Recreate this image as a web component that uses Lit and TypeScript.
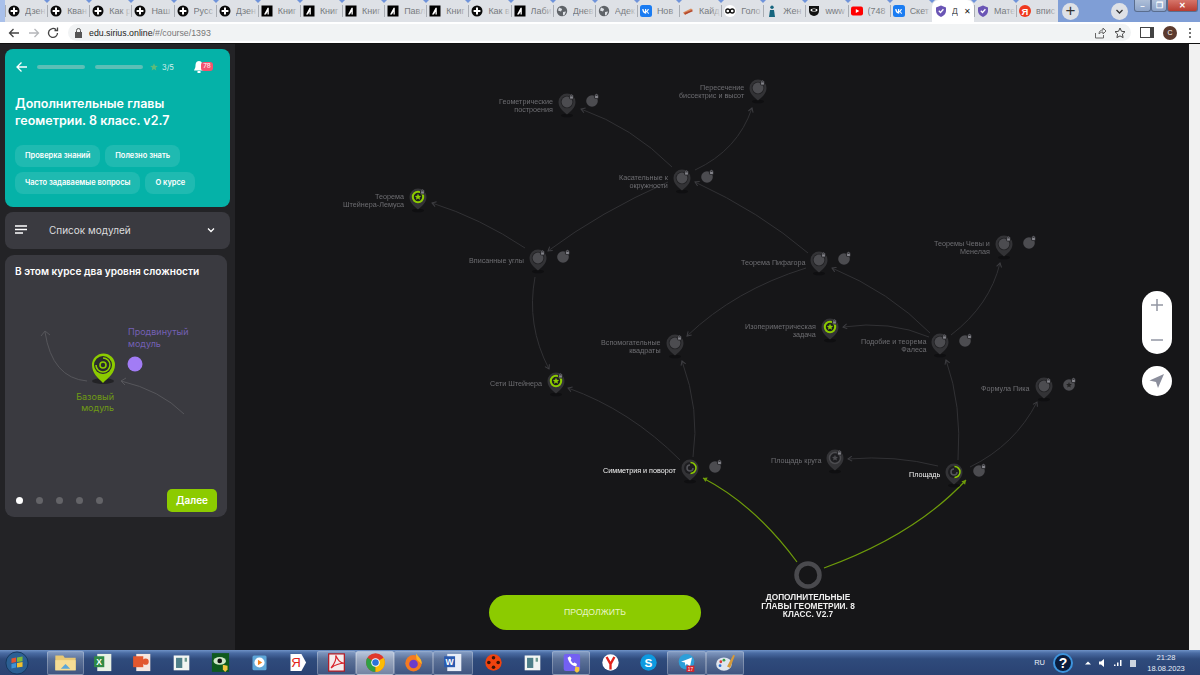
import { LitElement, html, css, svg } from "lit";
import { customElement } from "lit/decorators.js";

type Tab = { icon: string; title: string; active?: boolean };
const tabs: Tab[] = [
  ["plus", "Дзен"], ["plus", "Кван"], ["plus", "Как р"], ["plus", "Наш"], ["plus", "Русс"], ["plus", "Дзен"],
  ["lit", "Книг"], ["lit", "Книг"], ["lit", "Книг"], ["lit", "Павл"], ["lit", "Книг"], ["plus", "Как в"],
  ["lit", "Лаби"], ["globe", "Днев"], ["globe", "Адек"], ["vk", "Нов"], ["cake", "Кайд"], ["inf", "Голо"],
  ["person", "Жен"], ["mask", "www"], ["yt", "(748"], ["vk", "Скет"], ["shield", "Д"], ["shield", "Мате"], ["ya", "впис"],
].map(([icon, title]) => ({ icon, title, active: false }));
tabs[22].active = true;

function tabIcon(k: string) {
  switch (k) {
    case "plus":
      return svg`<circle cx="6" cy="6" r="5.5" fill="#0a0a0a"/><path d="M6 2.6v6.8M2.6 6h6.8" stroke="#fff" stroke-width="2"/>`;
    case "lit":
      return svg`<rect x=".5" y=".5" width="11" height="11" fill="#000"/><path d="M3 9.500 6.600 2.800h1.200v6.700H6.500V6.800L5 9.500z" fill="#fff"/>`;
    case "globe":
      return svg`<circle cx="6" cy="6" r="5.200" fill="#5f6368"/><path d="M3 2.500 6.200 4 5 6.500 2 5.500zM7 7l3-.5-1.500 3.500-1.500.5z" fill="#dee1e6"/>`;
    case "vk":
      return svg`<rect width="12" height="12" rx="2.500" fill="#1a7cf2"/><path d="M2.200 4h1.300c.2 1.600.9 2.500 1.500 2.700V4h1.200v1.900c.6-.1 1.300-.9 1.500-1.900h1.200c-.2 1.200-1 2-1.600 2.400.6.3 1.400 1 1.800 2.300H8c-.3-.9-1-1.500-1.800-1.600v1.600H6C3.800 8.700 2.400 6.900 2.200 4z" fill="#fff"/>`;
    case "cake":
      return svg`<path d="M1 7.500 9 3.500l2 1.500-8 5z" fill="#d98a5c"/><path d="M2 8 10 5l.8 1.200-7.500 3.300z" fill="#b3492e"/>`;
    case "inf":
      return svg`<circle cx="6" cy="6" r="6" fill="#fff"/><circle cx="3.800" cy="6" r="2" fill="none" stroke="#111" stroke-width="1.300"/><circle cx="8.200" cy="6" r="2" fill="none" stroke="#111" stroke-width="1.300"/>`;
    case "person":
      return svg`<circle cx="6" cy="2.200" r="1.700" fill="#17657e"/><path d="M4 5h4l1 7H3z" fill="#17657e"/>`;
    case "mask":
      return svg`<path d="M1 1h10v5a5 5 0 0 1-10 0z" fill="#111"/><ellipse cx="6" cy="5" rx="3.500" ry="1.600" fill="#fff"/><ellipse cx="6" cy="5" rx="2" ry="1" fill="#111"/>`;
    case "yt":
      return svg`<rect y="1.500" width="12" height="9" rx="2" fill="#f00"/><path d="M4.800 4v4L8.300 6z" fill="#fff"/>`;
    case "shield":
      return svg`<path d="M6 .5 11 2.500v3.500C11 9 8.500 10.800 6 12 3.500 10.800 1 9 1 6V2.500z" fill="#6a55b5"/><path d="M3.800 5.800 5.500 7.500 8.400 4.300" fill="none" stroke="#fff" stroke-width="1.300"/>`;
    default:
      return svg`<circle cx="6" cy="6" r="6" fill="#f0391e"/><text x="6" y="9.500" text-anchor="middle" font-size="9.500" font-weight="700" font-family="Liberation Sans" fill="#fff">Я</text>`;
  }
}

type Node = { x: number; y: number; l: string[]; k: string; dot?: string; white?: boolean };
const nodes: Node[] = [
  { x: 567, y: 102, l: ["Геометрические", "построения"], k: "lock", dot: "lock" },
  { x: 758, y: 88, l: ["Пересечение", "биссектрис и высот"], k: "lock" },
  { x: 682, y: 178, l: ["Касательные к", "окружности"], k: "lock", dot: "lock" },
  { x: 418, y: 197, l: ["Теорема", "Штейнера-Лемуса"], k: "done" },
  { x: 538, y: 258, l: ["Вписанные углы"], k: "lock", dot: "lock" },
  { x: 819, y: 260, l: ["Теорема Пифагора"], k: "lock", dot: "lock" },
  { x: 1004, y: 244, l: ["Теоремы Чевы и", "Менелая"], k: "lock", dot: "lock" },
  { x: 675, y: 343, l: ["Вспомогательные", "квадраты"], k: "lock" },
  { x: 830, y: 327, l: ["Изопериметрическая", "задача"], k: "done" },
  { x: 940, y: 342, l: ["Подобие и теорема", "Фалеса"], k: "lock", dot: "lock" },
  { x: 1044, y: 386, l: ["Формула Пика"], k: "lock", dot: "star" },
  { x: 556, y: 381, l: ["Сети Штейнера"], k: "done" },
  { x: 835, y: 458, l: ["Площадь круга"], k: "star" },
  { x: 690, y: 468, l: ["Симметрия и поворот"], k: "prog", dot: "lock", white: true },
  { x: 954, y: 472, l: ["Площадь"], k: "prog", dot: "lock", white: true },
];

const edges = [
  "M672 167Q632 127 581 109", "M695 170Q738 150 752 108", "M668 182Q600 212 548 251",
  "M525 248Q480 218 432 203", "M535 277Q526 325 549 369", "M808 253Q760 212 695 182",
  "M806 268Q735 290 687 336", "M930 333Q890 292 832 268", "M951 335Q990 305 1000 263",
  "M929 337Q890 320 843 327", "M958 460Q962 405 946 360", "M970 467Q1015 445 1037 402",
  "M938 466Q895 455 848 459", "M680 460Q630 410 568 388", "M693 457Q700 410 682 361",
];
const greenEdges = ["M797 562Q755 505 703 478", "M824 568Q915 535 966 480"];

const star = (x: number, y: number, r: number, fill: string) => {
  const pts: string[] = [];
  for (let i = 0; i < 10; i++) {
    const a = -Math.PI / 2 + (i * Math.PI) / 5;
    const rr = i % 2 ? r * 0.45 : r;
    pts.push(`${(x + rr * Math.cos(a)).toFixed(1)},${(y + rr * Math.sin(a)).toFixed(1)}`);
  }
  return svg`<polygon points=${pts.join(" ")} fill=${fill}/>`;
};
const lock = (x: number, y: number) => svg`
  <circle cx=${x} cy=${y} r="2.600" fill="#2a2a2d"/>
  <rect x=${x - 1.4} y=${y - 0.6} width="2.800" height="2.200" fill="#85858c"/>
  <path d="M${x - 0.9} ${y - 0.6}v-.7a.9 .9 0 0 1 1.800 0v.7" fill="none" stroke="#85858c" stroke-width=".6"/>`;

function pin({ x, y, k }: Node) {
  return svg`
    <ellipse cx=${x} cy=${y + 13.5} rx="6" ry="1.800" fill="#0f0f11"/>
    <path d="M${x} ${y + 12.5}C${x - 3} ${y + 10} ${x - 8.5} ${y + 6} ${x - 8.5} ${y}a8.500 8.500 0 0 1 17 0C${x + 8.5} ${y + 6} ${x + 3} ${y + 10} ${x} ${y + 12.5}z" fill="#333336"/>
    ${k === "lock" ? svg`<circle cx=${x} cy=${y} r="6.300" fill="#232326"/><circle cx=${x} cy=${y} r="5.400" fill="#4c4c50"/>${lock(x + 4.5, y - 5)}` : ""}
    ${k === "done" ? svg`<circle cx=${x} cy=${y} r="5.200" fill="#1d1d20" stroke="#8ccb00" stroke-width="2"/>${star(x, y, 3.4, "#8ccb00")}${lock(x + 4.5, y - 5)}` : ""}
    ${k === "star" ? svg`<circle cx=${x} cy=${y} r="5.500" fill="#1d1d20" stroke="#4c4c50" stroke-width="1.500"/>${star(x, y, 3.2, "#4c4c50")}${lock(x + 4.5, y - 5)}` : ""}
    ${k === "prog" ? svg`<circle cx=${x} cy=${y} r="6" fill="#1d1d20"/><path d="M${x + 0.5} ${y - 5.5}A5.500 5.500 0 0 1 ${x + 0.5} ${y + 5.5}" fill="none" stroke="#8ccb00" stroke-width="1.500"/><path d="M${x} ${y - 3}A3 3 0 1 0 ${x + 3} ${y}" fill="none" stroke="#55555a" stroke-width="1.500"/>` : ""}`;
}
function dot({ x, y, dot: d }: Node) {
  if (!d) return "";
  const cx = x + 25, cy = y - 1;
  return svg`<circle cx=${cx} cy=${cy} r="5.800" fill="#4c4c50"/>${d === "star" ? star(cx, cy, 3, "#222") : ""}${lock(cx + 4.5, cy - 4.5)}`;
}

function taskIcon(k: string) {
  switch (k) {
    case "explorer":
      return svg`<path d="M3 7h10l2 3h14v16H3z" fill="#e8c874"/><path d="M3 13h26v13H3z" fill="#f6dd95"/><path d="M10 24l6-6 6 6z" fill="#5ba6d8"/>`;
    case "excel":
      return svg`<rect x="8" y="5" width="18" height="22" fill="#e8f0e4"/><rect x="4" y="8" width="13" height="14" fill="#2f8a46"/><text x="10.500" y="19" text-anchor="middle" font-size="11" font-weight="700" font-family="Liberation Sans" fill="#fff">X</text>`;
    case "ppt":
      return svg`<rect x="8" y="5" width="18" height="22" fill="#f5e6df"/><rect x="4" y="8" width="13" height="14" fill="#e2572e"/><circle cx="20" cy="15" r="4" fill="#e2572e"/>`;
    case "note":
      return svg`<rect x="6" y="7" width="20" height="19" fill="#f2f5f2"/><rect x="9" y="10" width="8" height="13" fill="#4e7f88"/><path d="M20 10h3v5h-3z" fill="#6d9a8e"/>`;
    case "eye":
      return svg`<rect x="5" y="4" width="22" height="24" fill="#0f5a1e"/><ellipse cx="15" cy="14" rx="8" ry="5" fill="#cfe8c8"/><circle cx="15" cy="14" r="3" fill="#111"/><path d="M19 19l6 1v5l-3 3-3-3z" fill="#f3c63d"/>`;
    case "media":
      return svg`<rect x="7" y="7" width="18" height="19" rx="2" fill="#5fa7d8"/><circle cx="16" cy="16" r="6.500" fill="#fff"/><path d="M14 12.500v7l5.500-3.500z" fill="#f0831e"/>`;
    case "yabr":
      return svg`<path d="M7 5h14l6 11-6 11H7z" fill="#fff"/><text x="14" y="22" text-anchor="middle" font-size="17" font-family="Liberation Sans" fill="#e2231a">Я</text>`;
    case "pdf":
      return svg`<rect x="6" y="5" width="20" height="22" fill="#f4ecec" stroke="#b5121b" stroke-width="1.500"/><path d="M9 23C14 17 16 11 15 7c3 6 5 9 11 10-6 0-12 2-17 6z" fill="none" stroke="#d8232a" stroke-width="1.500"/>`;
    case "chrome":
      return svg`<circle cx="16" cy="16" r="12" fill="#e0372c"/><path d="M16 16 5.600 10A12 12 0 0 0 16 28z" fill="#2ea043"/><path d="M16 16v12A12 12 0 0 0 26.400 10z" fill="#fbbc05"/><circle cx="16" cy="16" r="5.500" fill="#fff"/><circle cx="16" cy="16" r="4.200" fill="#2a73d9"/>`;
    case "firefox":
      return svg`<circle cx="16" cy="17" r="10.500" fill="#f47a20"/><path d="M19 4c3 5 8 7 7.500 14L20 12z" fill="#fcb424"/><circle cx="16" cy="18" r="5.500" fill="#6d3bc9"/>`;
    case "word":
      return svg`<rect x="8" y="5" width="18" height="22" fill="#e9eef8"/><rect x="4" y="8" width="14" height="14" fill="#2a5bb0"/><text x="11" y="19" text-anchor="middle" font-size="11" font-weight="700" font-family="Liberation Sans" fill="#fff">W</text>`;
    case "film":
      return svg`<circle cx="16" cy="16" r="10.500" fill="#f0430f"/>${[[16, 10], [16, 22], [10, 16], [22, 16]].map(([a, b]) => svg`<circle cx=${a} cy=${b} r="2.300" fill="#3a1408"/>`)}`;
    case "viber":
      return svg`<rect x="6" y="5" width="21" height="22" rx="3" fill="#7360f2"/><path d="M11 10c2 7 5 10 11 11l1-3-3-2-2 1c-1-1-2-2-3-4l1-2-2-3z" fill="#fff"/><path d="M21 21l5 1v5l-3 2-3-2z" fill="#f3c63d"/>`;
    case "yandex":
      return svg`<circle cx="16" cy="16" r="10.500" fill="#fff"/><path d="M11 9l5 9 5-9M16 18v7" fill="none" stroke="#e2231a" stroke-width="3"/>`;
    case "skype":
      return svg`<circle cx="16" cy="16" r="10.500" fill="#0e9ae0"/><text x="16" y="21.500" text-anchor="middle" font-size="15" font-weight="700" font-family="Liberation Sans" fill="#fff">S</text>`;
    case "tg":
      return svg`<circle cx="16" cy="15" r="10" fill="#2c9fd9"/><path d="M9 15 23 9.500 20.500 21l-4-3-2 2-.5-4z" fill="#fff"/><rect x="16" y="20" width="10" height="8" fill="#d8232a"/><text x="21" y="26.500" text-anchor="middle" font-size="6" font-family="Liberation Sans" fill="#fff">17</text>`;
    case "paint":
      return svg`<ellipse cx="14" cy="18" rx="10" ry="8.500" fill="#dfe6ee"/><circle cx="10" cy="15" r="1.800" fill="#d83c3c"/><circle cx="14" cy="13" r="1.800" fill="#3c9e4a"/><circle cx="9" cy="20" r="1.800" fill="#2f6fd0"/><path d="M18 21 26 6l2 1-6 16z" fill="#d59a3a"/>`;
    default:
      return "";
  }
}
const taskItems = [
  { k: "explorer", w: 37, on: true }, { k: "excel", w: 39 }, { k: "ppt", w: 39 }, { k: "note", w: 39 }, { k: "eye", w: 39 },
  { k: "media", w: 38 }, { k: "yabr", w: 39 }, { k: "pdf", w: 39, on: true }, { k: "chrome", w: 38, on: true, bright: true },
  { k: "firefox", w: 39, on: true }, { k: "word", w: 40, on: true }, { k: "film", w: 40 }, { k: "note", w: 39 },
  { k: "viber", w: 38, on: true }, { k: "yandex", w: 40 }, { k: "skype", w: 37 }, { k: "tg", w: 39, on: true }, { k: "paint", w: 38, on: true },
];

@customElement("app-root")
export class AppRoot extends LitElement {
  static styles = css`
    :host { display: block; width: 1200px; height: 675px; overflow: hidden; font-family: "Inter", "Liberation Sans", sans-serif; background: #161618; }
    .strip { height: 22px; display: flex; background: #7f9ed6; position: relative; }
    .tabs { display: flex; background: #dee1e6; padding-left: 5px; box-sizing: border-box; }
    .strip-left { position: absolute; left: 0; top: 0; width: 5px; height: 22px; background: #a9c0ea; }
    .tab { width: 42.130px; box-sizing: border-box; display: flex; align-items: center; gap: 5px; padding-left: 3px; position: relative; font: 9px "Liberation Sans", sans-serif; color: #777b80; white-space: nowrap; }
    .tab::before { content: ""; position: absolute; left: 0; top: 5px; height: 12px; width: 1px; background: #a9adb3; }
    .tab .t { flex: 1; min-width: 0; overflow: hidden; }
    .tab::after { content: ""; position: absolute; right: 0; top: 0; width: 10px; height: 22px; background: linear-gradient(90deg, rgba(222,225,230,0), #dee1e6); }
    .tab svg { width: 12px; height: 12px; flex: none; }
    .tab.active { background: #fff; border-radius: 7px 7px 0 0; color: #555; }
    .tab.active::before, .tab.active::after { display: none; }
    .tab.active .t { flex: none; }
    .tab.active .x { font-size: 8px; color: #222; margin-right: 3px; margin-left: auto; }
    .pinmark { position: absolute; left: -3px; top: 0; width: 0; height: 0; border-left: 3px solid transparent; border-right: 3px solid transparent; border-top: 3px solid #6f93da; z-index: 1; }
    .newtab { position: absolute; left: 1062px; top: 3px; width: 17px; height: 17px; border-radius: 50%; background: #dee1e6; color: #333; font: 17px/16px "Liberation Sans", sans-serif; text-align: center; }
    .down { position: absolute; left: 1111px; top: 3px; width: 17px; height: 17px; border-radius: 50%; background: #dee1e6; }
    .down svg { display: block; width: 17px; height: 17px; }
    .winbtns { position: absolute; right: 2px; top: 0; display: flex; height: 12px; }
    .wb { background: linear-gradient(#aebfd8, #8ba2c8); border-radius: 0 0 3px 3px; color: #fff; text-align: center; font: 700 8px/11px "Liberation Sans", sans-serif; border: 1px solid #5a6d8e; border-top: 0; box-sizing: border-box; }
    .wb.close { width: 31px; background: linear-gradient(#d6756a, #b83c30); }
    .wb.min { width: 17px; }
    .wb.max { width: 16px; }
    .toolbar { height: 21px; background: #fff; display: flex; align-items: center; padding: 0 6px 0 7px; }
    .nav { display: flex; gap: 5.500px; width: 61px; flex: none; }
    .nav svg { width: 14px; height: 14px; }
    .pill { flex: 1; height: 17px; background: #f1f3f4; border-radius: 9px; display: flex; align-items: center; padding: 0 5px 0 6px; font: 8.800px "Liberation Sans", sans-serif; color: #777; }
    .pill b { font-weight: 400; color: #222; }
    .pill .lock { width: 9px; height: 10px; margin-right: 6px; }
    .pill .sp { flex: 1; }
    .pill svg.ic { width: 12px; height: 12px; margin-left: 8px; }
    .tools { display: flex; align-items: center; gap: 9px; padding-left: 9px; }
    .tools .panel { width: 9px; height: 9px; border: 1.500px solid #444; border-left-width: 4px; transform: scaleX(-1); }
    .avatar { width: 14px; height: 14px; border-radius: 50%; background: #5b3a2e; color: #fff; font: 7px/14px "Liberation Sans", sans-serif; text-align: center; }
    .dots { width: 2px; height: 2px; border-radius: 50%; background: #444; box-shadow: 0 -4px 0 #444, 0 4px 0 #444; margin: 0 3px; }
    .page { height: 607px; display: flex; border-top: 1px solid #111; box-sizing: border-box; }
    .side { width: 235px; flex: none; background: #232326; padding: 5px 0 0 5px; box-sizing: border-box; display: flex; flex-direction: column; gap: 5px; }
    .hero { width: 225px; height: 158px; background: #05b2a8; border-radius: 8px; box-sizing: border-box; padding: 12px 10px 0; color: #fff; }
    .hero-top { display: flex; align-items: center; height: 12px; }
    .hero-top svg.back { width: 13px; height: 12px; margin-right: 9px; }
    .bar { width: 48px; height: 4px; border-radius: 2px; background: #5cbfb6; margin-right: 10px; }
    .bar + .bar { margin-right: 7px; }
    .hero-top .st { width: 8px; height: 8px; margin-right: 4px; }
    .count { font-size: 7.500px; color: #d8f0ec; width: 32px; }
    .bell { position: relative; width: 24px; height: 12px; }
    .bell svg { position: absolute; left: 0; top: 0; width: 10px; height: 12px; }
    .badge { position: absolute; left: 7px; top: 1px; width: 12px; height: 9px; background: #f4536f; border-radius: 3px; font-size: 6.500px; line-height: 9px; text-align: center; }
    h1 { margin: 22px 0 0; font-size: 12.500px; line-height: 17px; font-weight: 600; }
    .chips { display: flex; flex-wrap: wrap; gap: 5px; margin-top: 16px; }
    .chip { height: 22px; border-radius: 8px; background: #1fbab1; padding: 0 10px; font-size: 7.500px; font-weight: 600; line-height: 22px; white-space: nowrap; }
    .list { width: 225px; height: 37px; border-radius: 8px; background: #3a3a40; display: flex; align-items: center; padding: 0 14px 2px 10px; box-sizing: border-box; color: #dcdcde; font-size: 10px; }
    .list svg.m { width: 12px; height: 10px; margin-right: 22px; }
    .list span { flex: 1; }
    .list svg.c { width: 10px; height: 10px; }
    .course { width: 222px; height: 262px; margin-top: 1px; border-radius: 9px; background: #3a3a40; box-sizing: border-box; padding: 10px 10px 0; display: flex; flex-direction: column; }
    .course h2 { margin: 0; font-size: 10.100px; line-height: 13px; font-weight: 600; color: #fff; white-space: nowrap; }
    .illo { width: 222px; height: 190px; margin: 7px -10px 0; flex: none; display: block; }
    .course-foot { display: flex; align-items: center; margin-top: 14px; }
    .pager { flex: 1; display: flex; gap: 13px; padding-left: 1px; }
    .pager i { width: 7px; height: 7px; border-radius: 50%; background: #646468; }
    .pager i.on { background: #fff; }
    .next { width: 50px; height: 23px; border-radius: 5px; background: #8ccb00; color: #fff; font-size: 10px; font-weight: 600; line-height: 23px; text-align: center; }
    .map { position: relative; flex: 1; background: #161618; overflow: hidden; }
    .map > svg { position: absolute; left: 0; top: 0; width: 954px; height: 606px; }
    .lbl { position: absolute; transform: translateY(-50%); will-change: transform; text-align: right; font: 7.200px/7.500px "Liberation Sans", sans-serif; color: #6e6e72; white-space: nowrap; }
    .lbl.w { color: #f2f2f2; }
    .root { position: absolute; left: 524px; top: 549px; width: 98px; text-align: center; font: 700 8.300px/8.500px "Liberation Sans", sans-serif; color: #eee; will-change: transform; }
    .go { position: absolute; left: 254px; top: 551px; width: 212px; height: 35px; border-radius: 18px; background: #8ccb00; color: #e9f6c8; font: 8.700px/35px "Liberation Sans", sans-serif; text-align: center; }
    .zoom { position: absolute; left: 907px; top: 247px; width: 30px; height: 63px; border-radius: 15px; background: #fff; display: flex; flex-direction: column; align-items: center; justify-content: space-between; padding: 7px 0; box-sizing: border-box; }
    .zoom svg { width: 14px; height: 14px; }
    .loc { position: absolute; left: 907px; top: 322px; width: 30px; height: 30px; border-radius: 50%; background: #fff; display: flex; align-items: center; justify-content: center; }
    .loc svg { width: 18px; height: 18px; }
    .right { width: 11px; flex: none; background: #f1f1f1; }
    .taskbar { height: 25px; background: linear-gradient(#6f92c6 0, #4a6ca3 3px, #2f4b7c 9px, #2a4272 100%); display: flex; align-items: center; padding-left: 2px; color: #e8eef8; }
    .orb { width: 30px; height: 25px; display: flex; align-items: center; justify-content: center; margin-right: 15px; flex: none; }
    .orb svg { width: 24px; height: 24px; }
    .ti { height: 24px; display: flex; align-items: center; justify-content: center; flex: none; box-sizing: border-box; }
    .ti svg { width: 25px; height: 25px; }
    .ti.on { background: linear-gradient(rgba(255,255,255,.28), rgba(255,255,255,.1)); border: 1px solid rgba(255,255,255,.25); border-radius: 2px; }
    .ti.bright { background: linear-gradient(rgba(255,255,255,.6), rgba(255,255,255,.35)); }
    .tray { margin-left: auto; display: flex; align-items: center; height: 25px; font: 7.500px "Liberation Sans", sans-serif; }
    .help { width: 20px; height: 20px; border-radius: 50%; background: #0a1c3c; border: 2px solid #3d94dd; box-sizing: border-box; color: #fff; text-align: center; font: 700 14px/16px "Liberation Sans", sans-serif; margin: 0 10px 0 8px; }
    .tray svg { width: 10px; height: 10px; margin-right: 5px; }
    .clock { width: 46px; text-align: center; line-height: 11px; margin: 0 11px 0 0; }
  `;

  render() {
    return html`
      <div class="strip">
        <div class="tabs">
          ${tabs.map((t, i) => html`<div class="tab ${t.active ? "active" : ""}">
            ${i > 0 ? html`<i class="pinmark"></i>` : ""}
            <svg viewBox="0 0 12 12">${tabIcon(t.icon)}</svg><span class="t">${t.title}</span>
            ${t.active ? html`<span class="x">✕</span>` : ""}
          </div>`)}
        </div>
        <div class="strip-left"></div>
        <div class="newtab">+</div>
        <div class="down"><svg viewBox="0 0 17 17"><path d="M5.500 7l3 3 3-3" fill="none" stroke="#333" stroke-width="1.300"/></svg></div>
        <div class="winbtns">
          <div class="wb min">–</div><div class="wb max">❐</div><div class="wb close">✕</div>
        </div>
      </div>
      <div class="toolbar">
        <div class="nav">
          <svg viewBox="0 0 14 14"><path d="M12 7H2.500M6.500 3 2.500 7l4 4" fill="none" stroke="#444" stroke-width="1.300"/></svg>
          <svg viewBox="0 0 14 14"><path d="M2 7h9.500M7.500 3l4 4-4 4" fill="none" stroke="#b5b7ba" stroke-width="1.300"/></svg>
          <svg viewBox="0 0 14 14"><path d="M11.500 7A4.500 4.500 0 1 1 10 3.600M11.500 1.500v3h-3" fill="none" stroke="#444" stroke-width="1.300"/></svg>
        </div>
        <div class="pill">
          <svg class="lock" viewBox="0 0 9 10"><rect x="1" y="4" width="7" height="6" fill="#555"/><path d="M2.500 4V2.500a2 2 0 0 1 4 0V4" fill="none" stroke="#555"/></svg>
          <b>edu.sirius.online</b>/#/course/1393
          <span class="sp"></span>
          <svg class="ic" viewBox="0 0 12 12"><path d="M1.500 6v5h8V8M5 7c0-3 2-4 4-4V1l3 3-3 3V5C7 5 6 6 5 7z" fill="none" stroke="#666"/></svg>
          <svg class="ic" viewBox="0 0 12 12"><path d="M6 1l1.500 3.300 3.500.4-2.600 2.400.7 3.500L6 8.900 2.900 10.600l.7-3.500L1 4.700l3.500-.4z" fill="none" stroke="#444"/></svg>
        </div>
        <div class="tools"><div class="panel"></div><div class="avatar">С</div><div class="dots"></div></div>
      </div>
      <div class="page">
        <aside class="side">
          <section class="hero">
            <div class="hero-top">
              <svg class="back" viewBox="0 0 13 12"><path d="M12 6H2M6.500 1.500 2 6l4.500 4.500" fill="none" stroke="#fff" stroke-width="1.300"/></svg>
              <div class="bar"></div><div class="bar"></div>
              <svg class="st" viewBox="0 0 10 10">${star(5, 5.3, 5, "#5fbb7a")}</svg>
              <span class="count">3/5</span>
              <div class="bell"><svg viewBox="0 0 10 12"><path d="M5 0c3 0 3.500 3 3.500 5S10 9 10 9.500H0C0 9 1.500 7 1.500 5S2 0 5 0z" fill="#fff"/><rect x="3.500" y="10" width="3" height="2" fill="#fff"/></svg><span class="badge">78</span></div>
            </div>
            <h1>Дополнительные главы<br />геометрии. 8 класс. v2.7</h1>
            <div class="chips">
              <span class="chip">Проверка знаний</span><span class="chip">Полезно знать</span>
              <span class="chip">Часто задаваемые вопросы</span><span class="chip">О курсе</span>
            </div>
          </section>
          <div class="list">
            <svg class="m" viewBox="0 0 12 10"><path d="M0 1h12M0 4.500h12M0 8h8" stroke="#fff" stroke-width="1.300"/></svg>
            <span>Список модулей</span>
            <svg class="c" viewBox="0 0 10 10"><path d="M2 3.500l3 3 3-3" fill="none" stroke="#fff" stroke-width="1.300"/></svg>
          </div>
          <section class="course">
            <h2>В этом курсе два уровня сложности</h2>
            <svg class="illo" viewBox="5 285 222 190" font-family="Inter, Liberation Sans, sans-serif" font-size="9">
              <path d="M87 381Q52 378 45 332M41 336l4-5 5 4" fill="none" stroke="#56565b" stroke-width="1"/>
              <path d="M184 414Q160 390 121 381M126 378l-5 3 4 4" fill="none" stroke="#56565b" stroke-width="1"/>
              <ellipse cx="103" cy="381" rx="11" ry="3" fill="#232326"/>
              <path d="M103 383C98 378 92 373 92 365a11.500 11.500 0 0 1 23 0C115 373 108 378 103 383z" fill="#8ccb00"/>
              <circle cx="103" cy="365" r="9" fill="#2a2a2e"/>
              <path d="M103 358a7 7 0 1 1-7 7" fill="none" stroke="#8ccb00" stroke-width="1.600"/>
              <circle cx="103" cy="365" r="3" fill="none" stroke="#8ccb00" stroke-width="1.600"/>
              <circle cx="135" cy="364" r="7.500" fill="#a27cf5"/>
              <text x="128" y="335" fill="#7460b5">Продвинутый</text>
              <text x="128" y="347" fill="#7460b5">модуль</text>
              <text x="114" y="400" fill="#6f9a15" text-anchor="end">Базовый</text>
              <text x="114" y="411" fill="#6f9a15" text-anchor="end">модуль</text>
            </svg>
            <div class="course-foot">
              <div class="pager"><i class="on"></i><i></i><i></i><i></i><i></i></div>
              <div class="next">Далее</div>
            </div>
          </section>
        </aside>
        <main class="map">
          <svg viewBox="235 44 954 606">
            <defs>
              <marker id="a" viewBox="0 0 6 6" refX="5" refY="3" markerWidth="6" markerHeight="6" markerUnits="userSpaceOnUse" orient="auto"><path d="M1 .5 5 3 1 5.500" fill="none" stroke="#3e3e42" stroke-width="1"/></marker>
              <marker id="g" viewBox="0 0 6 6" refX="5" refY="3" markerWidth="6" markerHeight="6" markerUnits="userSpaceOnUse" orient="auto"><path d="M1 .5 5 3 1 5.500z" fill="#6e9c0a"/></marker>
            </defs>
            ${edges.map((d) => svg`<path d=${d} fill="none" stroke="#313134" stroke-width="1" marker-end="url(#a)"/>`)}
            ${greenEdges.map((d) => svg`<path d=${d} fill="none" stroke="#6e9c0a" stroke-width="1.200" marker-end="url(#g)"/>`)}
            ${nodes.map((n) => svg`${pin(n)}${dot(n)}`)}
            <circle cx="808" cy="575" r="11.500" fill="none" stroke="#4a4a4e" stroke-width="4.500"/>
          </svg>
          ${nodes.map((n) => html`<div class="lbl ${n.white ? "w" : ""}" style="right:${954 - (n.x - 235) + 14}px;top:${n.y - 44 + 2.5}px">${n.l.map((s) => html`<div>${s}</div>`)}</div>`)}
          <div class="root">ДОПОЛНИТЕЛЬНЫЕ ГЛАВЫ ГЕОМЕТРИИ. 8 КЛАСС. V2.7</div>
          <div class="go">ПРОДОЛЖИТЬ</div>
          <div class="zoom">
            <svg viewBox="0 0 14 14"><path d="M7 1v12M1 7h12" stroke="#9296a3" stroke-width="1.500"/></svg>
            <svg viewBox="0 0 14 14"><path d="M1 7h12" stroke="#9296a3" stroke-width="1.500"/></svg>
          </div>
          <div class="loc"><svg viewBox="0 0 18 18"><path d="M16 2 10 16 8 10 1.500 8.500z" fill="#8b8e9c"/></svg></div>
        </main>
        <div class="right"></div>
      </div>
      <footer class="taskbar">
        <div class="orb"><svg viewBox="0 0 26 26"><circle cx="13" cy="13" r="12" fill="#2b5f93" stroke="#16365c"/><path d="M7 8l5-1v5l-5 1z" fill="#e2542f"/><path d="M13 7l6-1v5l-6 1z" fill="#7fb93a"/><path d="M7 14l5-1v5l-5 1z" fill="#3f93d6"/><path d="M13 13l6-1v5l-6 1z" fill="#f2bf2b"/></svg></div>
        ${taskItems.map((t) => html`<div class="ti ${t.on ? "on" : ""} ${t.bright ? "bright" : ""}" style="width:${t.w}px"><svg viewBox="0 0 32 32">${taskIcon(t.k)}</svg></div>`)}
        <div class="tray">
          <span>RU</span><div class="help">?</div>
          <svg viewBox="0 0 10 10"><path d="M2 6.500 5 3.500l3 3z" fill="#fff"/></svg>
          <svg viewBox="0 0 10 10"><path d="M1 3.500h2L6 1v8L3 6.500H1z" fill="#fff"/></svg>
          <svg viewBox="0 0 10 10"><path d="M1 8h1.500V6.500H1zM4 8h1.500V4.500H4zM7 8h1.500V2H7z" fill="#fff"/></svg>
          <svg viewBox="0 0 10 10"><path d="M2 2h6v7H2z" fill="#cdd5e0"/></svg>
          <div class="clock">21:28<br />18.08.2023</div>
        </div>
      </footer>
    `;
  }
}
